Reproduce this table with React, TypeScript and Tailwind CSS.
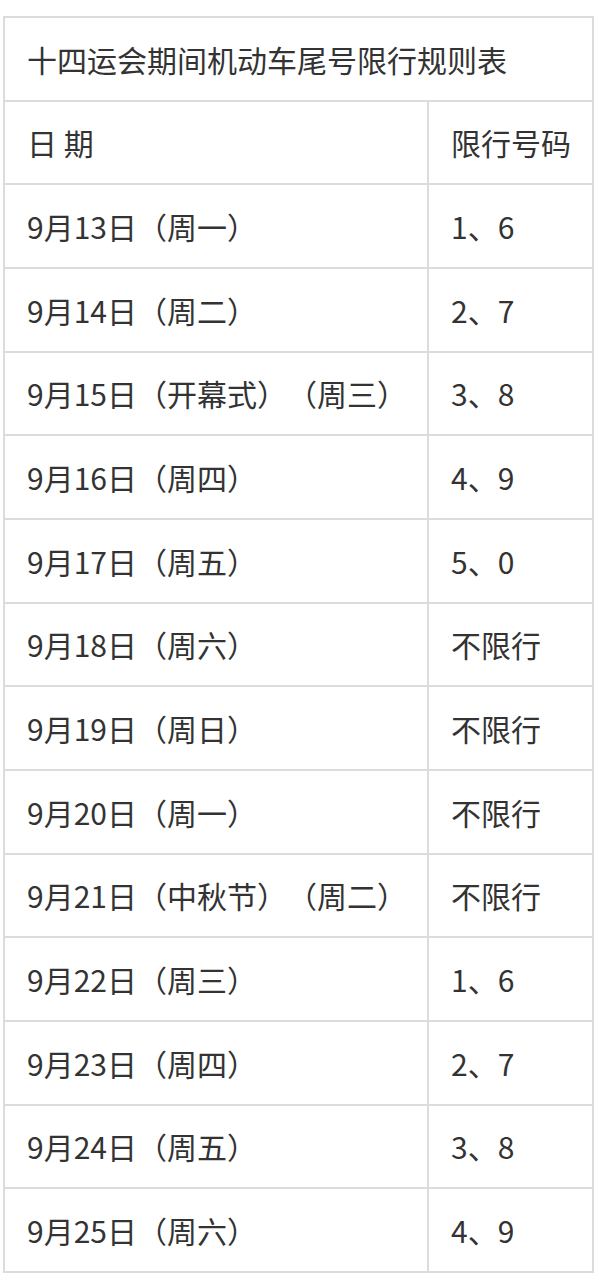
import React from "react";

const rows: [string, string][] = [
  ["9月13日（周一）", "1、6"],
  ["9月14日（周二）", "2、7"],
  ["9月15日（开幕式）（周三）", "3、8"],
  ["9月16日（周四）", "4、9"],
  ["9月17日（周五）", "5、0"],
  ["9月18日（周六）", "不限行"],
  ["9月19日（周日）", "不限行"],
  ["9月20日（周一）", "不限行"],
  ["9月21日（中秋节）（周二）", "不限行"],
  ["9月22日（周三）", "1、6"],
  ["9月23日（周四）", "2、7"],
  ["9月24日（周五）", "3、8"],
  ["9月25日（周六）", "4、9"],
];

export default function App() {
  return (
    <div
      className="w-[599px] h-[1280px] overflow-hidden bg-white pt-[16px] pl-[3px] text-[#333333] [text-spacing-trim:space-all] [font-feature-settings:'halt'_0,'chws'_0]"
      style={{ fontFamily: '"Noto Sans CJK SC", "Noto Sans", sans-serif' }}
    >
      <div className="w-[591px] border-l-2 border-r-2 border-t-2 border-[#dcdcdc]">
        <div className="h-[83.67px] box-border border-b-2 border-[#dcdcdc] flex items-center pl-[22px] text-[30px] leading-none">
          十四运会期间机动车尾号限行规则表
        </div>
        <div className="grid grid-cols-[424px_1fr] h-[83.67px] box-border border-b-2 border-[#dcdcdc] text-[30px] leading-none">
          <div className="flex items-center pl-[22px] border-r-2 border-[#dcdcdc]">日 期</div>
          <div className="flex items-center pl-[22px] whitespace-nowrap">限行号码</div>
        </div>
        {rows.map(([d, n], i) => (
          <div
            key={i}
            className="grid grid-cols-[424px_1fr] h-[83.67px] box-border border-b-2 border-[#dcdcdc] text-[30px] leading-none"
          >
            <div className="flex items-center pl-[22px] border-r-2 border-[#dcdcdc] whitespace-nowrap">{d}</div>
            <div className="flex items-center pl-[22px] whitespace-nowrap">{n}</div>
          </div>
        ))}
      </div>
    </div>
  );
}
